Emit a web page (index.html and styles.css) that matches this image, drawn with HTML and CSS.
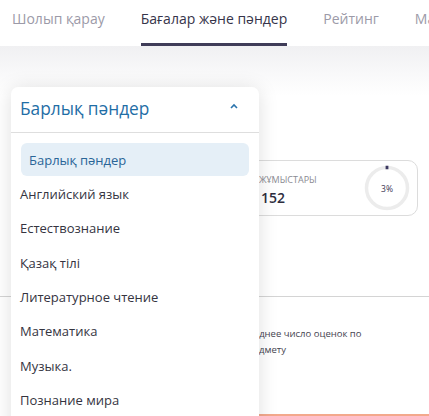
FILE: index.html
```html
<!DOCTYPE html>
<html lang="kk">
<head>
<meta charset="utf-8">
<title>Бағалар және пәндер</title>
<link rel="stylesheet" href="styles.css">
</head>
<body>
<nav class="tabs">
  <a class="tab">Шолып қарау</a>
  <a class="tab active">Бағалар және пәндер</a>
  <a class="tab">Рейтинг</a>
  <a class="tab">Ма</a>
</nav>
<main class="main">
  <section class="stats">
    <div class="stat-card">
      <div class="stat-text">
        <div class="stat-label">ЖҰМЫСТАРЫ</div>
        <div class="stat-value">152</div>
      </div>
      <div class="ring">
        <svg width="46" height="46" viewBox="0 0 46 46">
          <circle cx="23" cy="23" r="20.5" fill="none" stroke="#ececec" stroke-width="3.5"/>
          <path d="M21.6 2.5 h2.8" stroke="#3b3860" stroke-width="3.5" fill="none"/>
        </svg>
        <span class="ring-label">3%</span>
      </div>
    </div>
  </section>
  <section class="chart">
    <div class="chart-title">Среднее число оценок по<br>предмету</div>
    <div class="chart-bar"></div>
  </section>
</main>

<div class="dropdown">
  <div class="dropdown-head">
    <span class="dropdown-title">Барлық пәндер</span>
    <svg class="chevron" width="8" height="6" viewBox="0 0 8 6">
      <path d="M1 5 L4 2 L7 5" fill="none" stroke="#2b74ad" stroke-width="1.6"/>
    </svg>
  </div>
  <ul class="options">
    <li class="option selected">Барлық пәндер</li>
    <li class="option">Английский язык</li>
    <li class="option">Естествознание</li>
    <li class="option">Қазақ тілі</li>
    <li class="option">Литературное чтение</li>
    <li class="option">Математика</li>
    <li class="option">Музыка.</li>
    <li class="option">Познание мира</li>
  </ul>
</div>
</body>
</html>
```

FILE: styles.css
```css
* { box-sizing: border-box; }
html, body {
  margin: 0;
  width: 429px;
  height: 416px;
  overflow: hidden;
  background: #fff;
  font-family: "Open Sans", "Noto Sans", sans-serif;
}
.tabs {
  display: flex;
  gap: 36px;
  height: 46px;
  padding-left: 12px;
  background: #fff;
  white-space: nowrap;
  overflow: hidden;
}
.tab {
  display: block;
  font-size: 14px;
  line-height: 20px;
  padding-top: 9px;
  color: #9c9aa8;
  height: 46px;
  flex-shrink: 0;
}
.tab.active {
  color: #36344a;
  border-bottom: 3px solid #3f3c58;
}
.main {
  height: 370px;
  background: linear-gradient(#f0f0f2 0px, #f8f8f9 25px, #ffffff 50px);
  padding-top: 114px;
}
.stats {
  display: flex;
  justify-content: flex-end;
  padding-right: 11px;
}
.stat-card {
  width: 268px;
  height: 56px;
  border: 1px solid #dcdcdc;
  border-radius: 10px;
  display: flex;
  align-items: center;
  justify-content: space-between;
  padding: 0 7px 0 108px;
}
.stat-text {
  display: flex;
  flex-direction: column;
  margin-top: 6px;
}
.stat-label {
  font-size: 9px;
  line-height: 12px;
  color: #8a8a92;
}
.stat-value {
  font-size: 14px;
  line-height: 20px;
  font-weight: 600;
  color: #2e2d3e;
  margin-top: 2px;
  padding-left: 2px;
}
.ring {
  position: relative;
  width: 46px;
  height: 46px;
  display: flex;
}
.ring-label {
  position: absolute;
  inset: 0;
  display: flex;
  align-items: center;
  justify-content: center;
  font-size: 8.5px;
  color: #3a3552;
}
.chart {
  margin-top: 80px;
  border-top: 1.5px solid #d4d4d4;
  padding: 29px 0 0 242px;
}
.chart-title {
  font-size: 9.5px;
  line-height: 16px;
  color: #45444f;
}
.chart-bar {
  margin-top: 56px;
  height: 2px;
  background: #f3a88c;
}
.dropdown {
  position: absolute;
  left: 11px;
  top: 87px;
  width: 248px;
  height: 360px;
  background: #fff;
  border-radius: 7px;
  box-shadow: 0 2px 20px rgba(0, 0, 0, 0.13);
}
.dropdown-head {
  height: 46px;
  display: flex;
  align-items: center;
  justify-content: space-between;
  padding: 0 21px 2px 9px;
  border-bottom: 1.5px solid #dedede;
}
.dropdown-title {
  font-size: 17.3px;
  color: #1f6ea6;
}
.chevron { margin-top: -5px; }
.options {
  list-style: none;
  margin: 0;
  padding: 10px 10px 0 9px;
}
.option {
  height: 34.3px;
  display: flex;
  align-items: center;
  font-size: 13px;
  color: #35343f;
  white-space: nowrap;
}
.option.selected {
  height: 33px;
  margin-left: 1px;
  margin-bottom: 1px;
  padding-left: 8px;
  background: #e5eff7;
  border-radius: 6px;
  color: #2a6597;
}
```
